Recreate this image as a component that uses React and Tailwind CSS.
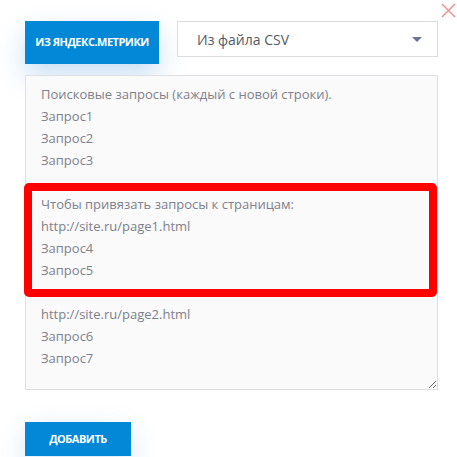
import React from 'react';

const placeholder = [
  'Поисковые запросы (каждый с новой строки).',
  'Запрос1',
  'Запрос2',
  'Запрос3',
  '',
  'Чтобы привязать запросы к страницам:',
  'http://site.ru/page1.html',
  'Запрос4',
  'Запрос5',
  '',
  'http://site.ru/page2.html',
  'Запрос6',
  'Запрос7',
].join('\n');

const App = () => {
  return (
    <div className="relative w-[457px] h-[457px] bg-white overflow-hidden font-['Open_Sans',sans-serif]">
      {/* Закрыть */}
      <button className="absolute right-[1px] top-[3px] w-[15px] h-[15px]">
        <svg viewBox="0 0 15 15" className="w-[15px] h-[15px]">
          <path d="M1 1 L14 14 M14 1 L1 14" stroke="#f08c8c" strokeWidth="1.4" fill="none" />
        </svg>
      </button>

      <div className="pl-[25px] pt-[21px] w-[438px]">
        {/* Header */}
        <div className="flex items-start gap-[18px]">
          <button className="w-[134px] h-[43px] bg-[#0288d6] text-white text-[11px] font-bold uppercase tracking-[-0.5px] shadow-[0_12px_28px_rgba(2,110,200,0.22)]">
            Из Яндекс.Метрики
          </button>
          <div className="flex items-center justify-between w-[261px] h-[36px] border border-[#dcdde2] bg-white pl-[19px] pr-[15px]">
            <span className="text-[14px] text-[#555a66]">Из файла CSV</span>
            <svg viewBox="0 0 10 5" className="w-[10px] h-[5px]">
              <path d="M0 0 L10 0 L5 5 Z" fill="#6b7590" />
            </svg>
          </div>
        </div>

        {/* Textarea */}
        <div className="relative mt-[11px]">
          <textarea
            placeholder={placeholder}
            className="block w-[413px] h-[315px] border border-[#dedfe3] bg-[#fafafa] pl-[15px] pt-[7px] text-[13px] leading-[22px] text-[#7d818d] placeholder:text-[#7d818d] outline-none"
          />
          <div className="absolute left-[-1px] top-[108px] w-[413px] h-[114px] border-[8px] border-[#ff0000] rounded-[5px] pointer-events-none" />
        </div>

        {/* Ações */}
        <button className="mt-[32px] w-[106px] h-[34px] bg-[#0288d6] text-white text-[11px] font-bold uppercase tracking-[-0.5px] shadow-[0_10px_28px_rgba(2,110,200,0.18)]">
          Добавить
        </button>
      </div>
    </div>
  );
};

export default App;
